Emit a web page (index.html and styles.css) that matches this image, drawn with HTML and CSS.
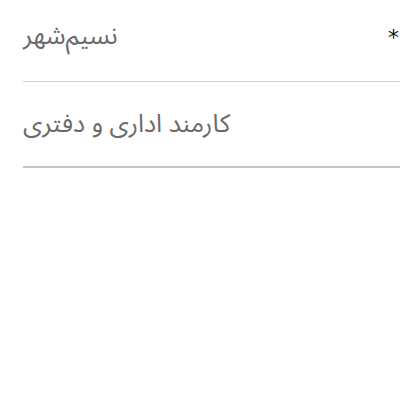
FILE: index.html
```html
<!DOCTYPE html>
<html lang="fa" dir="rtl">
<head>
<meta charset="utf-8">
<link rel="stylesheet" href="styles.css">
</head>
<body>
<div class="form">
  <div class="field field-first">
    <span class="req">*</span>
    <span class="value">نسیم‌شهر</span>
  </div>
  <div class="field field-second">
    <span class="value">کارمند اداری و دفتری</span>
  </div>
</div>
</body>
</html>
```
FILE: styles.css
```css
html, body {
  margin: 0;
  padding: 0;
  background: #fff;
}
body {
  font-family: "Noto Sans Arabic", "Noto Sans Arabic UI", "DejaVu Sans", sans-serif;
  direction: rtl;
}
.form {
  padding: 0 0 0 23px;
}
.field {
  display: flex;
  align-items: center;
  box-sizing: border-box;
  color: #6b6b6b;
  font-size: 25.3px;
  line-height: 1.4;
}
.field-first {
  height: 82px;
  border-bottom: 1px solid #cfcfcf;
  padding-bottom: 8px;
}
.field-second {
  height: 86px;
  border-bottom: 2px solid #c4c4c4;
  padding-top: 2px;
}
.req {
  color: #111;
  font-family: "DejaVu Sans", sans-serif;
  font-size: 22px;
  line-height: 1;
  align-self: flex-start;
  margin-top: 27px;
  margin-right: 1px;
}
.value {
  margin-right: auto;
}
```
